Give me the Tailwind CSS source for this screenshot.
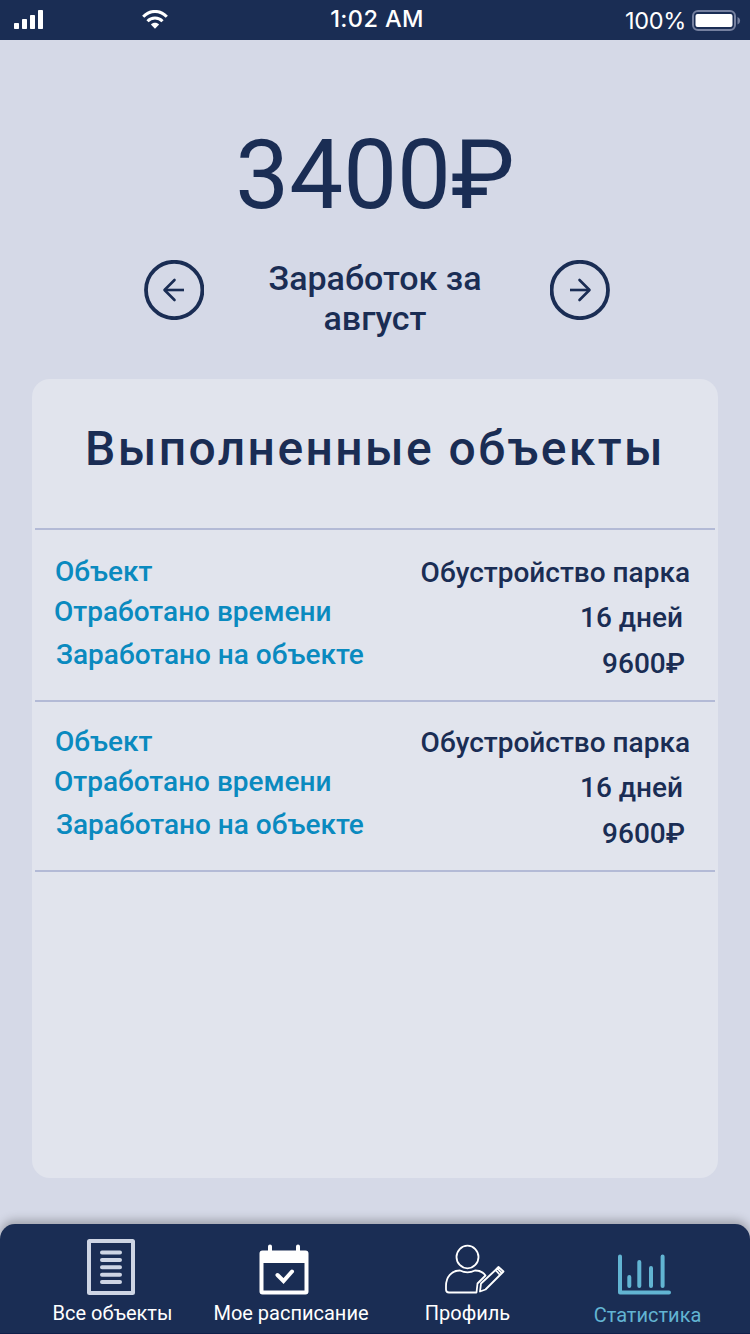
<!doctype html>
<html lang="ru">
    <head>
        <meta charset="UTF-8" />
        <meta name="viewport" content="width=device-width, initial-scale=1.0" />
        <title>Статистика</title>
        <script src="https://cdn.jsdelivr.net/npm/@tailwindcss/browser@4"></script>
    </head>
    <body class="flex h-[1334px] w-[750px] flex-col overflow-hidden bg-[#d5d9e7] font-['Roboto',sans-serif] whitespace-nowrap text-[#1a2d54]">
        <header class="grid h-10 shrink-0 grid-cols-3 bg-[#1a2d54] text-white">
            <div class="flex pt-[10px] pl-[14px]">
                <svg width="30" height="20" viewBox="0 0 30 20" fill="currentColor">
                    <rect y="13" width="5" height="6" rx=".7" />
                    <rect x="8" y="9" width="5" height="10" rx=".7" />
                    <rect x="16" y="5" width="5" height="14" rx=".7" />
                    <rect x="24" width="5" height="19" rx=".7" />
                </svg>
                <svg class="ml-[98px]" width="26" height="19" viewBox="0 0 26 19" fill="none" stroke="currentColor" stroke-width="3">
                    <path d="M1.2 6.8C8-.4 18-.4 24.800 6.800" />
                    <path d="M5.500 11.200C9.500 7 16.500 7 20.500 11.200" />
                    <path d="M8.900 14.600C11 12.200 15 12.200 17.100 14.600L13 18.800Z" fill="currentColor" stroke="none" />
                </svg>
            </div>
            <p class="pt-1 pl-1 text-center font-['Inter',sans-serif] text-[23.500px] leading-[30px] font-medium tracking-[0.4px]">1:02 AM</p>
            <div class="flex justify-end pr-[9px]">
                <p class="pt-[6px] font-['Inter',sans-serif] text-[23.500px] leading-[30px] tracking-[-0.3px]">100%</p>
                <svg class="mt-[10px] ml-[6px]" width="49" height="21" viewBox="0 0 49 21">
                    <rect x="1" y="1" width="42" height="19" rx="5" fill="none" stroke="#7681a0" stroke-width="2" />
                    <rect x="3.500" y="4" width="37" height="13" rx="2" fill="#fff" />
                    <path d="M45.500 7C49 8.500 49 13 45.500 14.500Z" fill="#7681a0" />
                </svg>
            </div>
        </header>

        <main class="flex-1 px-8">
            <h1 class="pt-[87px] text-center text-[96px] leading-[96px]">3400₽</h1>
            <div class="mt-[35px] flex justify-between px-[108px] pl-28">
                <button class="mt-[2px] size-[60px]">
                    <svg width="60" height="60" viewBox="0 0 60 60" fill="none" stroke="currentColor" stroke-width="2.600" stroke-linejoin="round">
                        <circle cx="30.200" cy="30" r="28.200" stroke-width="3.800" />
                        <path d="M40 30H20.500" />
                        <path d="M30.500 20L20.500 30L30.500 40" stroke-linecap="round" />
                    </svg>
                </button>
                <h2 class="pr-1 text-center text-[34px] leading-10 font-medium">Заработок за<br />август</h2>
                <button class="mt-[2px] size-[60px]">
                    <svg width="60" height="60" viewBox="0 0 60 60" fill="none" stroke="currentColor" stroke-width="2.600" stroke-linejoin="round">
                        <circle cx="29.800" cy="30" r="28.200" stroke-width="3.800" />
                        <path d="M20 30H39.500" />
                        <path d="M29.500 20L39.500 30L29.500 40" stroke-linecap="round" />
                    </svg>
                </button>
            </div>

            <section class="mt-[41px] h-[799px] rounded-[18px] bg-[#e1e4ed] px-[3px]">
                <h3 class="h-[149px] pt-[46px] text-center text-[48px] leading-[48px] font-medium tracking-[2.4px]">Выполненные объекты</h3>
                <div class="flex h-[172px] justify-between border-t-2 border-[#b3bad6] px-5 text-[28px] leading-10 font-medium">
                    <div class="pt-[22px] text-[#0a8abf]">
                        <p>Объект</p>
                        <p class="-ml-px">Отработано времени</p>
                        <p class="mt-[3px] ml-px">Заработано на объекте</p>
                    </div>
                    <div class="pt-[23px] pr-[5px] text-right">
                        <p>Обустройство парка</p>
                        <p class="mt-[5px] pr-[7px]">16 дней</p>
                        <p class="mt-[6px] pr-[5px]">9600₽</p>
                    </div>
                </div>
                <div class="flex h-[172px] justify-between border-y-2 border-[#b3bad6] px-5 text-[28px] leading-10 font-medium">
                    <div class="pt-5 text-[#0a8abf]">
                        <p>Объект</p>
                        <p class="-ml-px">Отработано времени</p>
                        <p class="mt-[3px] ml-px">Заработано на объекте</p>
                    </div>
                    <div class="pt-[21px] pr-[5px] text-right">
                        <p>Обустройство парка</p>
                        <p class="mt-[5px] pr-[7px]">16 дней</p>
                        <p class="mt-[6px] pr-[5px]">9600₽</p>
                    </div>
                </div>
            </section>
        </main>

        <nav class="flex h-[110px] shrink-0 rounded-t-[15px] border-b border-[#101f4a] bg-[#1a2d54] pl-[53px] text-[20px] leading-6 text-white shadow-[0_-4px_10px_rgba(0,0,0,0.25)]">
            <a class="flex w-[119px] flex-col items-center pt-[15px]">
                <svg class="-ml-[3px]" width="48" height="56" viewBox="0 0 48 56" fill="none" stroke="#ced5e4" stroke-width="4">
                    <rect x="2" y="2" width="44" height="52" rx=".5" />
                    <path d="M15 13.500H33M15 21H33M15 28.300H33M15 35.700H33M15 43H33" stroke-linecap="round" />
                </svg>
                <span class="mt-[6px]">Все объекты</span>
            </a>
            <a class="ml-[41px] flex w-[156px] flex-col items-center pt-5">
                <svg class="-ml-[14px]" width="50" height="51" viewBox="0 0 50 51" fill="none" stroke="currentColor" stroke-width="4">
                    <path d="M11 2.500V9M39 2.500V9" stroke-linecap="round" />
                    <rect x="2.500" y="8.500" width="45" height="40" rx="1" />
                    <path d="M2 7H48V19H2Z" fill="currentColor" stroke="none" />
                    <path d="M18.500 31L24.500 37L33 27.500" stroke-linecap="round" />
                </svg>
                <span class="mt-[6px]">Мое расписание</span>
            </a>
            <a class="ml-14 flex w-[85px] flex-col items-center pt-5">
                <svg class="ml-[15px]" width="60" height="51" viewBox="0 0 60 51" fill="none" stroke="currentColor" stroke-width="1.800" stroke-linejoin="round">
                    <ellipse cx="22.500" cy="13" rx="11" ry="11.300" />
                    <path d="M15 26.500C20 29 25 29 30 26.500C35 26.500 38.500 28.500 40.500 31.500L32.500 39.500L31.500 48.500H4C2 48.500 1 47.500 1 45.500V42C1 33 6.500 26.500 15 26.500Z" />
                    <path d="M35 47.500L36 39.500L50.500 26L55 31L40.500 45.500ZM50.500 26L53.500 23L58.500 27.500L55 31M52.300 24.500L56.800 29.200" />
                </svg>
                <span class="mt-[6px]">Профиль</span>
            </a>
            <a class="ml-[84px] flex w-[107px] flex-col items-center pt-[29px] text-[#62b4d2]">
                <svg class="-ml-[7px]" width="54" height="42" viewBox="0 0 54 42" fill="none" stroke="currentColor" stroke-width="4" stroke-linecap="round" stroke-linejoin="round">
                    <path d="M3 3.500V39.500H52" />
                    <path d="M12.300 24V33M22.300 9V33M34 15V33M45.600 3.500V33" />
                </svg>
                <span class="mt-[8px]">Статистика</span>
            </a>
        </nav>
    </body>
</html>
